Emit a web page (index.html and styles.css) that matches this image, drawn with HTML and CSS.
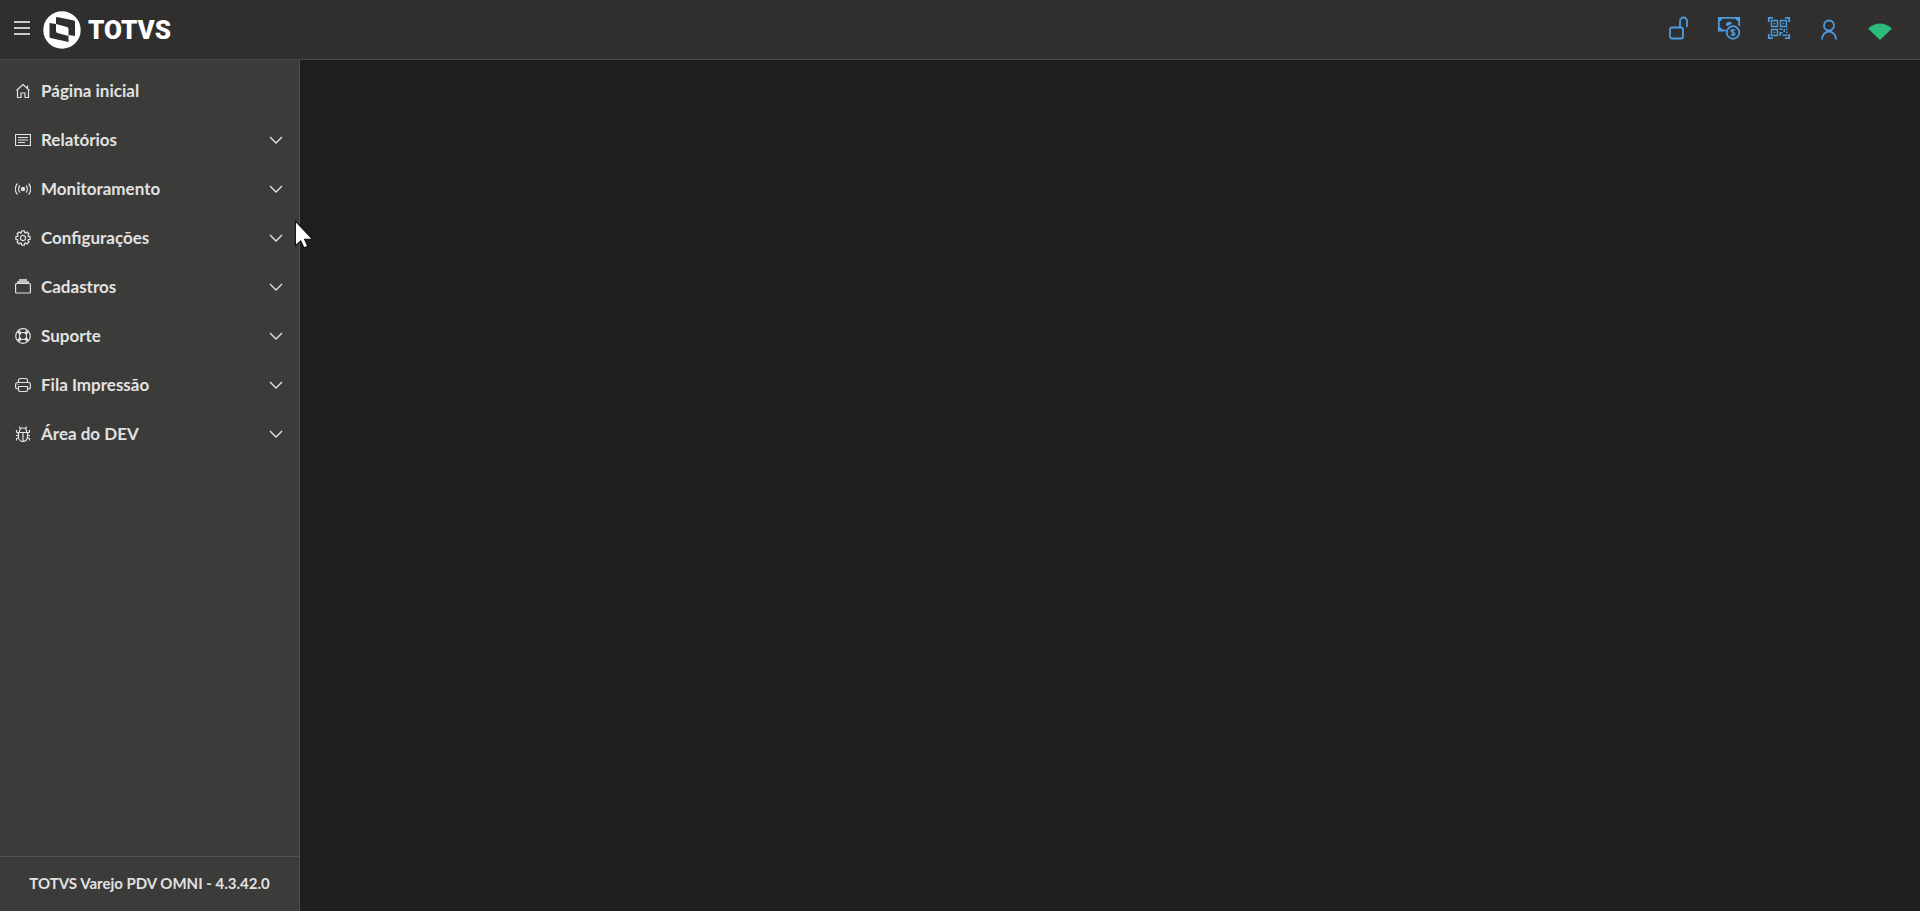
FILE: index.html
```html
<!DOCTYPE html>
<html lang="pt-BR">

<head>
  <meta charset="UTF-8">
  <meta name="viewport" content="width=device-width, initial-scale=1.0">
  <title>TOTVS Varejo PDV OMNI</title>
  <link rel="stylesheet" href="styles.css">
</head>

<body>
  <header class="topbar">
    <button class="menu-toggle" type="button" aria-label="Menu">
      <svg width="18" height="16" viewBox="0 0 18 16"><path d="M1 2h16M1 8h16M1 14h16"/></svg>
    </button>
    <a class="brand" href="#">
      <svg class="brand-mark" width="38" height="38" viewBox="0 0 38 38">
        <circle cx="19" cy="19" r="18.700" fill="#fff"/>
        <path d="M14 6L31 9.500Q32 10 32 11V25L25.500 24V31L7.500 27Q6.500 26.500 6.500 25.500V12L13 13V7Q13 6 14 6z" fill="#312f2e"/>
        <path d="M13 13L24 16Q25.500 16.500 25.500 18V25L14.500 22Q13 21.500 13 20z" fill="#fff"/>
      </svg>
      <span class="brand-name">TOTVS</span>
    </a>
    <div class="actions">
      <button type="button" aria-label="Abrir caixa">
        <svg width="24" height="24" viewBox="0 0 24 24"><rect x="3" y="11.500" width="13" height="11" rx="2"/><path d="M13 11.500V5a3.500 3.500 0 0 1 7 0v6"/></svg>
      </button>
      <button type="button" aria-label="Pagamentos">
        <svg width="24" height="24" viewBox="0 0 24 24"><path d="M8.500 14.500H1.800V1.800h20.400V10"/><path d="M2 2h3.500Q5 5 2 5.500zM22 2h-3.500q.5 3 3.500 3.500zM2 14.500V11q3 .5 3.500 3.500zM9 9.500a3.200 3.200 0 0 1 6-2L10.500 10z" fill="currentColor" stroke="none"/><circle cx="16" cy="16.500" r="6.300"/><path d="M18 14.500c-.5-1.200-4-1.200-4 .4 0 1.900 4 1.100 4 3 0 1.700-3.500 1.700-4 .3M16 13v7.200" stroke-width="1.400"/></svg>
      </button>
      <button type="button" aria-label="QR Code">
        <svg width="24" height="24" viewBox="0 0 24 24"><path d="M1.800 6V1.800H6M18 1.800h4.200V6M22.200 18v4.200H18M6 22.200H1.800V18"/><path d="M4.500 4.500h6v6h-6zM13.500 4.500h6v6h-6zM4.500 13.500h6v6h-6z" stroke-width="1.400"/><path d="M6.700 6.700h1.600v1.600H6.700zM15.700 6.700h1.600v1.600h-1.600zM6.700 15.700h1.600v1.600H6.700zM12.500 12.500h3V14h-3zM16.500 13H18v3h-1.500zM19 12.500h1.500V14H19zM12.500 16h3v1.500H14V20h-1.500zM19 15.500h1.500V17H19zM15.500 18.500h5V20h-5z" fill="currentColor" stroke="none"/></svg>
      </button>
      <button type="button" aria-label="Usuário">
        <svg width="24" height="24" viewBox="0 0 24 24"><circle cx="12" cy="9.500" r="5"/><path d="M5 23.500c0-4.500 3-8 7-8s7 3.500 7 8"/></svg>
      </button>
      <button type="button" class="online" aria-label="Conectado">
        <svg width="24" height="24" viewBox="0 0 24 24"><path d="M0 12.500Q12 2.500 24 12.500L12 24z" fill="currentColor" stroke="none"/></svg>
      </button>
    </div>
  </header>

  <div class="layout">
    <aside class="sidebar">
      <nav class="menu">
        <a class="menu-item" href="#">
          <svg class="icon" width="16" height="16" viewBox="0 0 16 16"><path d="M1.500 7.500L8 1.500l6.500 6M2.500 7v7.500H6V10h4v4.500h3.500V7M12.500 5V2.500"/></svg>
          <span>Página inicial</span>
        </a>
        <button class="menu-item" type="button">
          <svg class="icon" width="16" height="16" viewBox="0 0 16 16"><path d="M.5 2.500h15v11H.5zM3 5.500h10M3 8h10M3 10.500h7"/></svg>
          <span>Relatórios</span>
          <svg class="chevron" width="14" height="8" viewBox="0 0 14 8"><path d="M1 1l6 6 6-6"/></svg>
        </button>
        <button class="menu-item" type="button">
          <svg class="icon" width="16" height="16" viewBox="0 0 16 16"><circle cx="8" cy="8" r="2.200" fill="currentColor" stroke="none"/><path d="M5 4.500a5 5 0 0 0 0 7M11 4.500a5 5 0 0 1 0 7M2.500 2.500a8 8 0 0 0 0 11M13.500 2.500a8 8 0 0 1 0 11"/></svg>
          <span>Monitoramento</span>
          <svg class="chevron" width="14" height="8" viewBox="0 0 14 8"><path d="M1 1l6 6 6-6"/></svg>
        </button>
        <button class="menu-item" type="button">
          <svg class="icon" width="16" height="16" viewBox="-8 -8 16 16"><circle r="2.600"/><path d="M7.100-1.400V1.400L5.400 1.600 4.900 2.700 6 4 4 6 2.700 4.900 1.600 5.400 1.400 7.100H-1.400L-1.600 5.400-2.700 4.900-4 6-6 4-4.900 2.700-5.400 1.600-7.100 1.400V-1.400L-5.400-1.600-4.900-2.700-6-4-4-6-2.700-4.900-1.600-5.400-1.400-7.100H1.400L1.600-5.400 2.700-4.900 4-6 6-4 4.900-2.700 5.400-1.600z" stroke-linejoin="round"/></svg>
          <span>Configurações</span>
          <svg class="chevron" width="14" height="8" viewBox="0 0 14 8"><path d="M1 1l6 6 6-6"/></svg>
        </button>
        <button class="menu-item" type="button">
          <svg class="icon" width="16" height="16" viewBox="0 0 16 16"><path d="M4 0h8v2h2v2.500H2V2h2z" fill="currentColor" stroke="none" opacity=".8"/><rect x=".6" y="4.500" width="14.800" height="9.500" rx="1"/></svg>
          <span>Cadastros</span>
          <svg class="chevron" width="14" height="8" viewBox="0 0 14 8"><path d="M1 1l6 6 6-6"/></svg>
        </button>
        <button class="menu-item" type="button">
          <svg class="icon" width="16" height="16" viewBox="0 0 16 16"><circle cx="8" cy="8" r="7.300"/><circle cx="8" cy="8" r="3.500"/><path d="M3.200 3.200l2.400 2.400M10.400 10.400l2.400 2.400M12.800 3.200l-2.400 2.400M5.600 10.400l-2.400 2.400" stroke-width="3"/></svg>
          <span>Suporte</span>
          <svg class="chevron" width="14" height="8" viewBox="0 0 14 8"><path d="M1 1l6 6 6-6"/></svg>
        </button>
        <button class="menu-item" type="button">
          <svg class="icon" width="16" height="16" viewBox="0 0 16 16"><path d="M3.500 12H2.600a2 2 0 0 1-2-2V7.500a2 2 0 0 1 2-2h10.800a2 2 0 0 1 2 2V10a2 2 0 0 1-2 2h-.9M3.500 5.500v-2a2 2 0 0 1 2-2h5a2 2 0 0 1 2 2v2M3.500 9.500h9V13a1.500 1.500 0 0 1-1.500 1.500H5A1.500 1.500 0 0 1 3.500 13zM2.500 7.500h1"/></svg>
          <span>Fila Impressão</span>
          <svg class="chevron" width="14" height="8" viewBox="0 0 14 8"><path d="M1 1l6 6 6-6"/></svg>
        </button>
        <button class="menu-item" type="button">
          <svg class="icon" width="16" height="16" viewBox="0 0 16 16"><path d="M3.500 6.500h9V11a4.500 4.500 0 0 1-9 0zM4.500 6.500V5a3 3 0 0 1 3-3h1a3 3 0 0 1 3 3v1.500M8 6.500v9M4.500.5l1 2.500M11.500.5l-1 2.500M1.500 4v2l2 1.500M14.500 4v2l-2 1.500M1 9.500h2.500M12.500 9.500H15M1.500 14.500v-2l2-1M14.500 14.500v-2l-2-1"/></svg>
          <span>Área do DEV</span>
          <svg class="chevron" width="14" height="8" viewBox="0 0 14 8"><path d="M1 1l6 6 6-6"/></svg>
        </button>
      </nav>
      <footer class="version">TOTVS Varejo PDV OMNI - 4.3.42.0</footer>
    </aside>
    <main class="content"></main>
  </div>

  <svg class="cursor" width="20" height="30" viewBox="0 0 18 28"><path d="M1 1v23l5-4.500 3 6.500 3.500-1.500-3-6.500H17z" fill="#fff" stroke="#111"/></svg>
</body>

</html>
```
FILE: styles.css
```css
* {
  box-sizing: border-box;
}

body {
  margin: 0;
  min-height: 100vh;
  display: flex;
  flex-direction: column;
  font-family: Lato, "Open Sans", sans-serif;
  font-size: 17px;
  font-weight: 700;
  color: #e2e2e2;
  background-color: #1e1e1e;
}

button {
  padding: 0;
  border: none;
  background: none;
  color: inherit;
  font: inherit;
  cursor: pointer;
}

a {
  color: inherit;
  text-decoration: none;
}

svg {
  display: block;
  flex-shrink: 0;
  fill: none;
  stroke: currentColor;
}

.topbar {
  display: flex;
  align-items: center;
  height: 60px;
  padding: 0 14px 0 13px;
  background-color: #312f2e;
  border-bottom: 1px solid #4a4a49;
}

.menu-toggle {
  margin-right: 12px;
  padding-bottom: 3px;
  color: #c5cecc;
}

.menu-toggle svg {
  stroke-width: 2;
}

.brand {
  display: flex;
  align-items: center;
  gap: 7px;
  color: #fff;
}

.brand-mark {
  stroke: none;
}

.brand-name {
  font-family: Roboto, sans-serif;
  font-size: 26px;
  font-weight: 900;
  line-height: 36px;
}

.actions {
  display: flex;
  margin-left: auto;
  color: #4a9be0;
}

.actions button {
  display: flex;
  justify-content: center;
  width: 50px;
  padding-bottom: 4px;
}

.actions svg {
  stroke-width: 1.8;
}

.actions .online {
  width: 52px;
  color: #2bbb7b;
}

.layout {
  display: flex;
  flex: 1;
}

.sidebar {
  display: flex;
  flex-direction: column;
  width: 300px;
  background-color: #3b3b39;
  border-right: 1px solid #505050;
}

.menu {
  flex: 1;
  padding-top: 6px;
}

.menu-item {
  display: flex;
  align-items: center;
  gap: 10px;
  width: 100%;
  height: 49px;
  padding: 0 16px 0 15px;
  text-align: left;
}

.icon {
  stroke-width: 1.2;
}

.chevron {
  margin-left: auto;
  stroke-width: 1.4;
}

.version {
  height: 55px;
  border-top: 1px solid #505050;
  font-size: 15px;
  line-height: 52px;
  text-align: center;
}

.content {
  flex: 1;
}

.cursor {
  position: absolute;
  top: 220px;
  left: 294px;
}
```
